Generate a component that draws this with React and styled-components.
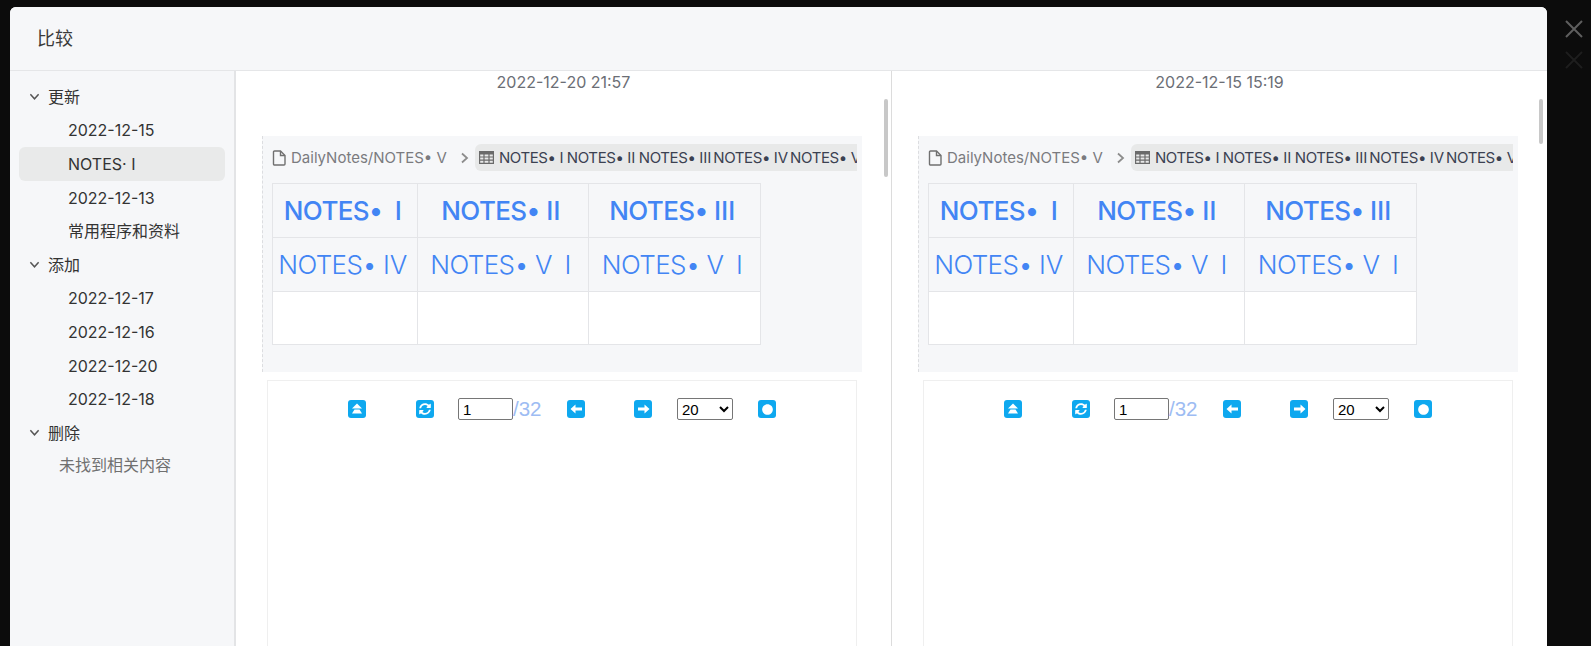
import React from 'react';
import styled, { createGlobalStyle } from 'styled-components';
import { FaCircle, FaSyncAlt } from 'react-icons/fa';

const GlobalStyle = createGlobalStyle`
  html, body {
    margin: 0;
    height: 100%;
    overflow: hidden;
    background: #0c0c0c;
  }
  #root {
    height: 100%;
  }
`;

const Backdrop = styled.div`
  position: relative;
  height: 646px;
  padding: 7px 0 0 10px;
  box-sizing: border-box;
  overflow: hidden;
  background: #0c0c0c;
  font-family: "Inter", "Noto Sans CJK SC", sans-serif;
`;

const CloseMark = styled.svg`
  position: absolute;
  left: 1565px;
  top: ${({ $top }) => $top}px;
  width: 18px;
  height: 18px;
  stroke: ${({ $dim }) => ($dim ? '#1e1e1e' : '#5f5f5f')};
  stroke-width: 2;
  fill: none;
`;

const Modal = styled.div`
  width: 1537px;
  height: 660px;
  display: flex;
  flex-direction: column;
  background: #fff;
  border-radius: 6px 6px 0 0;
  overflow: hidden;
`;

const Header = styled.div`
  height: 64px;
  flex: none;
  display: flex;
  align-items: center;
  padding: 0 0 3px 27px;
  box-sizing: border-box;
  background: #f6f7f9;
  border-bottom: 1px solid #e5e6e8;
  font-size: 18px;
  color: #3a3a3a;
`;

const Body = styled.div`
  flex: 1;
  display: flex;
  min-height: 0;
`;

const Sidebar = styled.div`
  flex: none;
  width: 226px;
  padding: 9px 9px 0;
  box-sizing: border-box;
  background: #f6f7f9;
  border-right: 2px solid #e3e4e6;
  font-size: 16px;
  line-height: 22px;
  color: #333;
`;

const GroupRow = styled.div`
  height: 33.6px;
  display: flex;
  align-items: center;
  gap: 8px;
  padding-left: 10px;
`;

const Chevron = styled.svg`
  width: 11px;
  height: 11px;
  stroke: #555;
  stroke-width: 1.6;
  fill: none;
`;

const ItemRow = styled.div`
  height: 33.6px;
  display: flex;
  align-items: center;
  padding-left: 49px;
  border-radius: 6px;
  background: ${({ $active }) => ($active ? '#e9eaea' : 'transparent')};
`;

const EmptyRow = styled.div`
  height: 31px;
  display: flex;
  align-items: center;
  padding-left: 40px;
  color: #707070;
`;

const Pane = styled.div`
  position: relative;
  flex: none;
  width: ${({ $width }) => $width}px;
  padding-left: 26px;
  box-sizing: border-box;
  border-right: ${({ $divider }) => ($divider ? '1px solid #dcdcdc' : 'none')};
  overflow: hidden;
`;

const Stamp = styled.div`
  height: 23px;
  margin-left: -26px;
  text-align: center;
  font-size: 16px;
  line-height: 23px;
  color: #6b6e75;
`;

const Thumb = styled.div`
  position: absolute;
  top: 28px;
  right: ${({ $right }) => $right}px;
  width: 4px;
  height: ${({ $height }) => $height}px;
  border-radius: 2px;
  background: #c8c8c8;
`;

const Embed = styled.div`
  width: 600px;
  height: 236px;
  margin-top: 42px;
  padding: 0 5px 0 9px;
  box-sizing: border-box;
  background: #f6f7f9;
  border-left: 1px dashed #dcdde0;
`;

const Crumbs = styled.div`
  height: 47px;
  padding-bottom: 4px;
  box-sizing: border-box;
  display: flex;
  align-items: center;
  overflow: hidden;
  font-family: "Inter", "DejaVu Sans", sans-serif;
  font-size: 15px;
  white-space: nowrap;
`;

const CrumbPath = styled.span`
  display: flex;
  align-items: center;
  gap: 5px;
  color: #7b7b7f;
`;

const CrumbArrow = styled.svg`
  flex: none;
  width: 10px;
  height: 12px;
  margin: 0 5px 0 13px;
  stroke: #8d8d8d;
  stroke-width: 1.8;
  fill: none;
`;

const CrumbChip = styled.span`
  flex: 1;
  min-width: 0;
  height: 27px;
  display: flex;
  align-items: center;
  gap: 5px;
  padding-left: 4px;
  overflow: hidden;
  border-radius: 6px 0 0 6px;
  background: #e8e9e9;
  color: #3b4151;
  letter-spacing: -0.4px;

  svg {
    flex: none;
  }
`;

const CellTable = styled.table`
  width: 488px;
  border-collapse: collapse;
  table-layout: fixed;
  font-family: "Inter", "DejaVu Sans", sans-serif;
  font-size: 26px;
  letter-spacing: -0.6px;
  color: #4285f4;
`;

const Cell = styled.td`
  height: ${({ $blank }) => ($blank ? 52 : 53)}px;
  padding: 0 5px 0 0;
  border: 1px solid #e4e5e8;
  text-align: center;
  white-space: nowrap;
  font-weight: ${({ $head }) => ($head ? 450 : 300)};
  background: ${({ $blank }) => ($blank ? '#fff' : 'transparent')};
`;

const PdfFrame = styled.div`
  width: 590px;
  height: 280px;
  margin: 8px 0 0 5px;
  box-sizing: border-box;
  border: 1px solid #efefef;
`;

const PdfBar = styled.div`
  height: 56px;
  display: flex;
  align-items: center;
  justify-content: center;
  font-family: "Liberation Sans", Arial, sans-serif;
`;

const BarIcon = styled.span`
  width: 18px;
  height: 18px;
  flex: none;
  display: flex;
  align-items: center;
  justify-content: center;
  margin: ${({ $margin }) => $margin};
  border-radius: 3px;
  background: #0ea8ef;
  color: #fff;
  font-size: ${({ $size }) => $size || 11}px;
`;

const PageInput = styled.input`
  width: 55px;
  height: 22px;
  padding: 1px 4px;
  box-sizing: border-box;
  border: 1px solid #767676;
  border-radius: 2px;
  font: 15px "Liberation Sans", Arial, sans-serif;
`;

const PageCount = styled.span`
  width: 54px;
  font-size: 20.5px;
  color: #9dbcf3;
`;

const SizeSelect = styled.select`
  width: 56px;
  height: 22px;
  margin-right: 25px;
  background: #fff;
  border: 1px solid #767676;
  border-radius: 2px;
  font: 15px "Liberation Sans", Arial, sans-serif;
`;

const updated = ['2022-12-15', 'NOTES· Ⅰ', '2022-12-13', '常用程序和资料'];
const added = ['2022-12-17', '2022-12-16', '2022-12-20', '2022-12-18'];

const headCells = ['NOTES•\u2002Ⅰ', 'NOTES• Ⅱ', 'NOTES• Ⅲ'];
const bodyCells = ['NOTES• Ⅳ', 'NOTES• Ⅴ\u2002Ⅰ', 'NOTES• Ⅴ\u2002Ⅰ'];

const Down = () => (
  <Chevron viewBox="0 0 12 12">
    <path d="M1.5 3.5 6 8.5l4.5-5" />
  </Chevron>
);

const Group = ({ title }) => (
  <GroupRow>
    <Down />
    {title}
  </GroupRow>
);

const FileIcon = () => (
  <svg width="14" height="16" viewBox="0 0 14 16" fill="none" stroke="#707070" strokeWidth="1.4">
    <path d="M2.5 1h6L13 5.5V14a1 1 0 0 1-1 1H2.5a1 1 0 0 1-1-1V2a1 1 0 0 1 1-1Z" />
    <path d="M8.5 1v4.5H13" />
  </svg>
);

const GridIcon = () => (
  <svg width="15" height="13" viewBox="0 0 15 13" fill="#6a6a6a">
    <path d="M0 0h15v13H0Zm1.2 3.4v2h3.2v-2Zm4.4 0v2h3.8v-2Zm5 0v2h3.2v-2Zm-9.4 3.2v2h3.2v-2Zm4.4 0v2h3.8v-2Zm5 0v2h3.2v-2Zm-9.4 3.2v2h3.2v-2Zm4.4 0v2h3.8v-2Zm5 0v2h3.2v-2Z" fillRule="evenodd" />
  </svg>
);

const TopIcon = () => (
  <svg width="12" height="12" viewBox="0 0 12 12" fill="#fff">
    <path d="M6 0.5 11 5.5H1Z" />
    <path d="M3.5 6.5h5L11 10.5H1Z" />
  </svg>
);

const ArrowIcon = ({ flip }) => (
  <svg width="13" height="12" viewBox="0 0 13 12" fill="#fff" transform={flip ? 'scale(-1 1)' : undefined}>
    <path d="M1 4.6h6.5V1.5L12.5 6l-5 4.5V7.4H1Z" />
  </svg>
);

const ComparePane = ({ stamp, width, divider, thumbRight, thumbHeight }) => (
  <Pane $width={width} $divider={divider}>
    <Stamp>{stamp}</Stamp>
    <Thumb $right={thumbRight} $height={thumbHeight} />
    <Embed>
      <Crumbs>
        <CrumbPath>
          <FileIcon />
          DailyNotes/NOTES• V
        </CrumbPath>
        <CrumbArrow viewBox="0 0 10 12">
          <path d="M2 1.5 7 6l-5 4.5" />
        </CrumbArrow>
        <CrumbChip>
          <GridIcon />
          {'NOTES• Ⅰ NOTES• Ⅱ NOTES• Ⅲ\u2009NOTES• Ⅳ\u2009NOTES• V'}
        </CrumbChip>
      </Crumbs>
      <CellTable>
        <colgroup>
          <col width="145" />
          <col width="171" />
          <col width="172" />
        </colgroup>
        <tbody>
          <tr>
            {headCells.map((text) => (
              <Cell key={text} $head>{text}</Cell>
            ))}
          </tr>
          <tr>
            {bodyCells.map((text, index) => (
              <Cell key={index}>{text}</Cell>
            ))}
          </tr>
          <tr>
            <Cell $blank />
            <Cell $blank />
            <Cell $blank />
          </tr>
        </tbody>
      </CellTable>
    </Embed>
    <PdfFrame>
      <PdfBar>
        <BarIcon $margin="0 50px 0 0"><TopIcon /></BarIcon>
        <BarIcon $margin="0 24px 0 0" $size={12}><FaSyncAlt /></BarIcon>
        <PageInput defaultValue="1" />
        <PageCount>/32</PageCount>
        <BarIcon $margin="0 49px 0 0"><ArrowIcon flip /></BarIcon>
        <BarIcon $margin="0 25px 0 0"><ArrowIcon /></BarIcon>
        <SizeSelect defaultValue="20">
          <option>10</option>
          <option>20</option>
          <option>50</option>
        </SizeSelect>
        <BarIcon><FaCircle /></BarIcon>
      </PdfBar>
    </PdfFrame>
  </Pane>
);

const App = () => (
  <>
    <GlobalStyle />
    <Backdrop>
      <CloseMark $top={20} viewBox="0 0 18 18">
        <path d="M1 1l16 16M17 1 1 17" />
      </CloseMark>
      <CloseMark $top={51} $dim viewBox="0 0 18 18">
        <path d="M1 1l16 16M17 1 1 17" />
      </CloseMark>
      <Modal>
        <Header>比较</Header>
        <Body>
          <Sidebar>
            <Group title="更新" />
            {updated.map((name, index) => (
              <ItemRow key={name} $active={index === 1}>{name}</ItemRow>
            ))}
            <Group title="添加" />
            {added.map((name) => (
              <ItemRow key={name}>{name}</ItemRow>
            ))}
            <Group title="删除" />
            <EmptyRow>未找到相关内容</EmptyRow>
          </Sidebar>
          <ComparePane stamp="2022-12-20 21:57" width={656} divider thumbRight={3} thumbHeight={78} />
          <ComparePane stamp="2022-12-15 15:19" width={655} thumbRight={4} thumbHeight={45} />
        </Body>
      </Modal>
    </Backdrop>
  </>
);

export default App;
